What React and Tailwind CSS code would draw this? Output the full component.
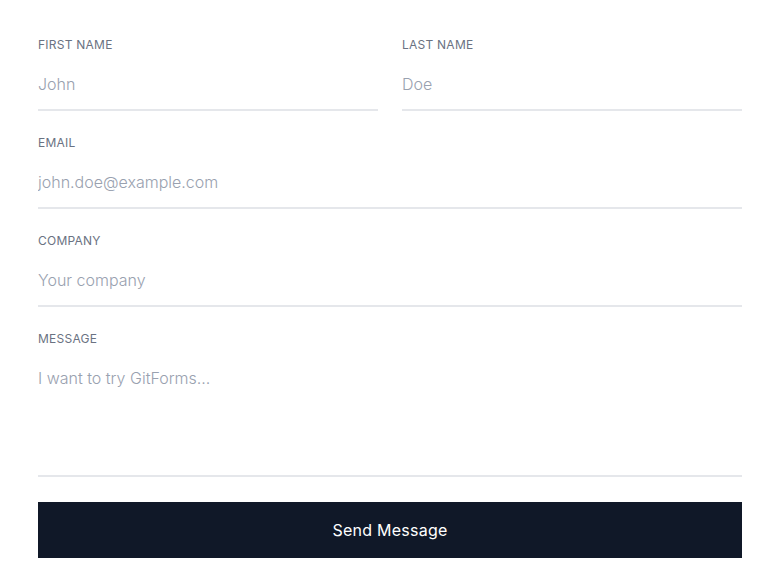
import React from "react";

const Field = ({ label, placeholder, type = "text" }) => (
  <div className="flex flex-col">
    <label className="text-xs uppercase tracking-[0.02em] text-gray-500 leading-4">{label}</label>
    <input
      type={type}
      placeholder={placeholder}
      className="mt-2 w-full border-0 border-b-2 border-gray-200 bg-white px-0 pt-[11px] pb-[13px] text-base font-light leading-6 text-gray-900 placeholder-gray-400 outline-none"
    />
  </div>
);

export default function App() {
  return (
    <div className="min-h-screen bg-white px-[38px] pt-[37px] font-['Inter',sans-serif]">
      <form className="flex flex-col gap-6">
        <div className="grid grid-cols-2 gap-6">
          <Field label="First Name" placeholder="John" />
          <Field label="Last Name" placeholder="Doe" />
        </div>
        <Field label="Email" placeholder="john.doe@example.com" type="email" />
        <Field label="Company" placeholder="Your company" />
        <div className="flex flex-col">
          <label className="text-xs uppercase tracking-[0.02em] text-gray-500 leading-4">Message</label>
          <textarea
            rows={4}
            placeholder="I want to try GitForms..."
            className="mt-2 w-full resize-none border-0 border-b-2 border-gray-200 bg-white px-0 pt-[11px] pb-[13px] text-base font-light leading-6 text-gray-900 placeholder-gray-400 outline-none"
          />
        </div>
        <button
          type="button"
          className="mt-[1px] w-full bg-gray-900 py-4 text-base leading-6 tracking-[0.015em] text-white"
        >
          Send Message
        </button>
      </form>
    </div>
  );
}
